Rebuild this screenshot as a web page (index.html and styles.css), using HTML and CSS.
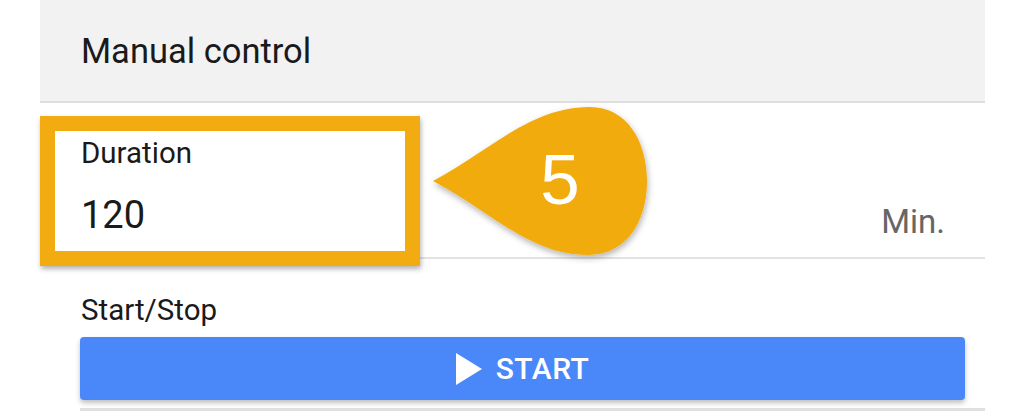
FILE: index.html
```html
<!DOCTYPE html>
<html lang="en">
<head>
    <meta charset="UTF-8">
    <title>Manual control</title>
    <link rel="stylesheet" href="styles.css">
</head>
<body>
    <div class="panel">
        <div class="panel-header">Manual control</div>

        <div class="field-row">
            <div class="field">
                <label class="field-label" for="duration">Duration</label>
                <div class="field-value" id="duration">120</div>
            </div>
            <span class="field-unit">Min.</span>
        </div>

        <div class="control-row">
            <div class="control-label">Start/Stop</div>
            <button type="button" class="start-btn">
                <svg class="play-icon" width="26" height="32" viewBox="0 0 26 32">
                    <path d="M0 0 L26 16 L0 32 Z" fill="#ffffff"/>
                </svg>
                START
            </button>
        </div>

        <!-- annotation overlay -->
        <div class="highlight-box"></div>
        <div class="callout">
            <svg width="240" height="170" viewBox="0 0 240 170">
                <defs>
                    <filter id="drop" x="-10%" y="-10%" width="130%" height="130%">
                        <feDropShadow dx="1" dy="3" stdDeviation="3" flood-color="#000" flood-opacity="0.3"/>
                    </filter>
                </defs>
                <path d="M3 84 C 60 54 100 10 160 10 C 196 10 217 43 217 84 C 217 125 196 158 158 158 C 100 158 60 114 3 84 Z"
                      fill="#f2ab10" filter="url(#drop)"/>
                <text x="130" y="107" text-anchor="middle" class="callout-num">5</text>
            </svg>
        </div>
    </div>
</body>
</html>
```

FILE: styles.css
```css
body {
    margin: 0;
    font-family: Roboto, "Noto Sans", sans-serif;
    background-color: #ffffff;
    color: #1a1a1a;
}

.panel {
    position: relative;
    margin-left: 40px;
    width: 945px;
    height: 413px;
}

.panel-header {
    height: 103px;
    box-sizing: border-box;
    padding-left: 41px;
    display: flex;
    align-items: center;
    background-color: #f2f2f2;
    border-bottom: 2px solid #dedede;
    font-size: 34.5px;
}

.field-row {
    height: 156px;
    box-sizing: border-box;
    display: flex;
    justify-content: space-between;
    align-items: flex-start;
    padding: 33px 40px 0 41px;
    border-bottom: 2px solid #e2e2e2;
}

.field {
    display: flex;
    flex-direction: column;
}

.field-label {
    font-size: 29.5px;
    line-height: 34px;
}

.field-value {
    font-size: 38px;
    line-height: 44px;
    margin-top: 23px;
}

.field-unit {
    font-size: 33px;
    line-height: 40px;
    margin-top: 66px;
    color: #666666;
}

.control-row {
    margin-left: 40px;
    padding: 34px 20px 8px 0;
    border-bottom: 3px solid #e0e0e0;
}

.control-label {
    font-size: 29.5px;
    line-height: 34px;
    padding-left: 1px;
}

.start-btn {
    width: 885px;
    height: 63px;
    margin-top: 10px;
    display: flex;
    justify-content: center;
    align-items: center;
    gap: 14px;
    background-color: #4a88fa;
    color: #ffffff;
    border: none;
    border-radius: 4px;
    box-shadow: 0 3px 5px rgba(0, 0, 0, 0.25);
    font-family: Roboto, sans-serif;
    font-weight: 500;
    font-size: 30px;
    letter-spacing: 0.5px;
    cursor: pointer;
}

.highlight-box {
    position: absolute;
    left: 0;
    top: 116px;
    width: 350px;
    height: 120px;
    border: 15px solid #f2ab10;
    box-shadow: 1px 3px 5px rgba(0, 0, 0, 0.3);
}

.callout {
    position: absolute;
    left: 390px;
    top: 97px;
}

.callout-num {
    font-family: "Liberation Sans", Arial, sans-serif;
    font-size: 71px;
    fill: #ffffff;
}
```
